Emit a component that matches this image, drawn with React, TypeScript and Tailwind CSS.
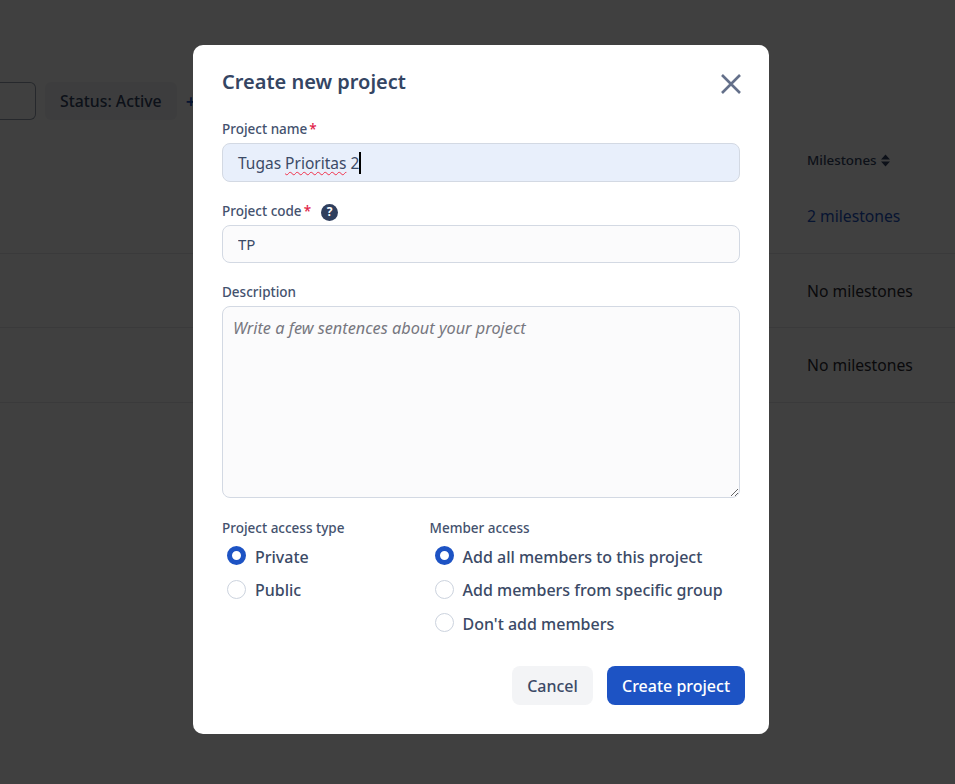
function Radio({ label, checked }: { label: string; checked?: boolean }) {
  return (
    <div className="flex h-[33.5px] items-center gap-[9px] pl-[5px]">
      {checked ? (
        <span className="h-[19px] w-[19px] shrink-0 rounded-full border-[5.5px] border-[#1d53c4] bg-white" />
      ) : (
        <span className="h-[19px] w-[19px] shrink-0 rounded-full border border-[#ccd3de] bg-white" />
      )}
      <span className="pt-[2px] text-[16px] font-medium text-[#3b4a66]">{label}</span>
    </div>
  );
}

function Milestones({ text, blue }: { text: string; blue?: boolean }) {
  return (
    <div className="flex h-[74.5px] items-center border-b border-gray-200 pl-[807px]">
      <span className={blue ? "pt-[3px] text-[15.7px] text-[#1d53c4]" : "pt-[3px] text-[15.7px] text-[#2b2b33]"}>{text}</span>
    </div>
  );
}

export default function App() {
  return (
    <div className="relative h-[784px] w-[955px] overflow-hidden bg-white font-['Noto_Sans',sans-serif]">
      {/* page behind the dialog */}
      <div className="mt-[82px] flex h-[38px] items-center gap-[9px]">
        <div className="h-[38px] w-[36px] rounded-r-md border border-l-0 border-gray-400 bg-white" />
        <div className="flex h-[38px] items-center rounded-md bg-gray-100 px-[15px] pt-[2px] text-[15.8px] font-medium text-[#344563]">
          Status: Active
        </div>
        <span className="text-[18px] font-semibold text-[#1d53c4]">+</span>
      </div>
      <div className="mt-[29px] flex h-[22px] items-center gap-1 pl-[807px] text-[13.4px] font-medium text-[#344563]">
        Milestones
        <svg width="9" height="13" viewBox="0 0 9 13" className="fill-[#344563]">
          <path d="M4.5 0.5 L9 5.5 H0 Z M0 7.5 H9 L4.5 12.5 Z" />
        </svg>
      </div>
      <div className="mt-[8px]">
        <Milestones text="2 milestones" blue />
        <Milestones text="No milestones" />
        <Milestones text="No milestones" />
      </div>

      {/* dialog */}
      <div className="absolute inset-0 bg-black/75 pl-[193px] pt-[45px]">
        <div className="h-[689px] w-[576px] rounded-[10px] bg-white px-[29px] pt-[22px]">
          <div className="flex h-[30px] items-center justify-between">
            <h2 className="text-[20px] font-semibold text-[#344563]">Create new project</h2>
            <svg width="20" height="20" viewBox="0 0 20 20" className="mr-[-1px] mt-[4px] stroke-[#64708a]" fill="none" strokeWidth="2.6">
              <path d="M1 1 L19 19 M19 1 L1 19" />
            </svg>
          </div>

          <div className="mt-[24px] flex h-[18px] items-center pb-[2px] text-[13.5px] font-medium text-[#44526e]">
            Project name<span className="ml-[2px] text-[#e11d48]">*</span>
          </div>
          <div className="mt-[4px] flex h-[39px] w-[518px] items-center rounded-lg border border-[#d3d9e3] bg-[#e8effb] pl-[15px] text-[15.5px] text-[#3b4a66]">
            <div className="pt-[3px]">
              Tugas&nbsp;
              <span className="underline decoration-[#f0304a] decoration-wavy decoration-1 underline-offset-[2px]">Prioritas</span>
              &nbsp;2
            </div>
            <span className="h-[22px] w-[2px] bg-black" />
          </div>

          <div className="mt-[21px] flex h-[18px] items-center pb-[2px] text-[13.5px] font-medium text-[#44526e]">
            Project code<span className="ml-[2px] text-[#e11d48]">*</span>
            <span className="ml-[10px] mt-[2px] flex h-[17px] w-[17px] items-center justify-center rounded-full bg-[#2f3f5e] text-[12px] font-bold text-white">
              ?
            </span>
          </div>
          <input
            readOnly
            value="TP"
            className="mt-[4px] block h-[38px] w-[518px] rounded-lg border border-[#d3d9e3] bg-[#fbfbfc] pl-[15px] text-[15px] text-[#3b4a66] outline-none"
          />

          <div className="mt-[21px] flex h-[18px] items-center pb-[2px] text-[13.5px] font-medium text-[#44526e]">
            Description
          </div>
          <textarea
            readOnly
            placeholder="Write a few sentences about your project"
            className="mt-[4px] block h-[192px] w-[518px] rounded-lg border border-[#d3d9e3] bg-[#fbfbfc] px-[10px] py-[9px] text-[16.3px] italic outline-none placeholder:text-[#77777f]"
          />

          <div className="mt-[22px] flex">
            <div className="w-[207.5px]">
              <div className="mb-[1px] flex h-[18px] items-center pb-[2px] text-[13.5px] font-medium text-[#44526e]">
                Project access type
              </div>
              <Radio label="Private" checked />
              <Radio label="Public" />
            </div>
            <div>
              <div className="mb-[1px] flex h-[18px] items-center pb-[2px] text-[13.5px] font-medium text-[#44526e]">
                Member access
              </div>
              <Radio label="Add all members to this project" checked />
              <Radio label="Add members from specific group" />
              <Radio label="Don't add members" />
            </div>
          </div>

          <div className="mr-[-5px] mt-[26.5px] flex justify-end gap-[14px]">
            <button className="h-[39px] w-[81px] rounded-lg bg-[#f3f4f6] text-[16px] font-medium text-[#3b4a66]">
              Cancel
            </button>
            <button className="h-[39px] w-[138px] rounded-lg bg-[#1d53c4] text-[16px] font-medium text-white">
              Create project
            </button>
          </div>
        </div>
      </div>
    </div>
  );
}
